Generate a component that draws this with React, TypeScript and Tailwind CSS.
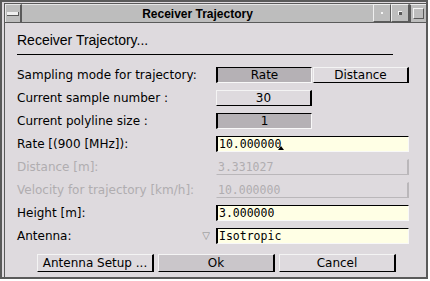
import React from "react";

const raised =
  "border-t border-l border-t-[#f4f4f4] border-l-[#f4f4f4] border-r-2 border-b border-r-black border-b-black";
const sunken =
  "border-t border-l-2 border-t-black border-l-black border-r border-b border-r-[#f8f8f8] border-b-[#f8f8f8]";
const inputBox =
  "border-t border-l-2 border-t-black border-l-black border-r border-b border-r-[#f8f8f8] border-b-[#f8f8f8] bg-[#ffffe5]";
const disabledBox =
  "border-r-2 border-b border-r-[#bab7ba] border-b-[#bab7ba] border-t border-l border-t-transparent border-l-transparent";

function Label({ children, disabled }: { children: React.ReactNode; disabled?: boolean }) {
  return (
    <div
      className={
        "w-[199px] shrink-0 text-[12px] leading-[16px] " + (disabled ? "text-[#b0adb0]" : "text-black")
      }
    >
      {children}
    </div>
  );
}

export default function App() {
  return (
    <div
      className="w-[430px] h-[281px] bg-white overflow-hidden"
      style={{ fontFamily: '"DejaVu Sans", sans-serif' }}
    >
      <div className="w-[428px] h-[279px] border-2 border-[#5a5a5a] bg-[#dedade] pt-px pl-[2px] flex flex-col">
        <div className="flex-1 border-l border-t border-[#5a5a5a] flex flex-col">
          {/* title bar */}
          <div className="h-[19px] flex shrink-0 border-b border-[#5a5a5a] bg-[#bdbdbd]">
            <div className="w-[17px] h-full border-t border-l border-[#e6e6e6] border-r-2 border-r-[#5a5a5a] flex items-center justify-center">
              <div className="w-[12px] h-[4px] bg-[#f0f0f0] border-b border-r border-[#5a5a5a]" />
            </div>
            <div
              className="flex-1 flex items-center justify-center text-[12px] font-bold text-black border-t border-[#e6e6e6]"
              style={{ fontFamily: '"Liberation Sans", Arial, sans-serif' }}
            >
              Receiver Trajectory
            </div>
            <div className="w-[18px] h-full border-t border-l border-[#efefef] border-r border-b border-r-[#5a5a5a] border-b-[#5a5a5a] flex items-center justify-center">
              <div className="w-[2px] h-[2px] bg-[#f4f4f4]" />
            </div>
            <div className="w-[18px] h-full border-t border-l border-[#efefef] border-r border-b border-r-[#5a5a5a] border-b-[#5a5a5a] flex items-center justify-center">
              <div className="w-[4px] h-[4px] bg-[#5a5a5a] border-t border-l border-[#f4f4f4]" />
            </div>
            <div className="w-[17px] h-full border-t border-l border-[#efefef] border-l-2 border-l-[#5a5a5a] flex items-center justify-center">
              <div className="w-[11px] h-[11px] border-t border-l border-[#f4f4f4] border-r border-b border-r-[#5a5a5a] border-b-[#5a5a5a]" />
            </div>
          </div>

          {/* content */}
          <div className="flex-1 flex flex-col pl-[12px] pt-[9px]">
            <div
              className="text-[14px] leading-[17px] text-black"
              style={{ fontFamily: '"Liberation Sans", Arial, sans-serif' }}
            >
              Receiver Trajectory...
            </div>
            <div className="mt-[5px] h-px w-[376px] bg-black" />

            <div className="mt-[12px] flex flex-col gap-[7px]">
              <div className="flex items-center h-[16px]">
                <Label>Sampling mode for trajectory:</Label>
                <div className={"w-[96px] h-[16px] bg-[#b5b1b5] text-[12px] leading-[14px] text-center " + sunken}>
                  Rate
                </div>
                <div className={"ml-px w-[96px] h-[16px] text-[12px] leading-[14px] text-center " + raised}>
                  Distance
                </div>
              </div>

              <div className="flex items-center h-[16px]">
                <Label>Current sample number :</Label>
                <div className={"w-[96px] h-[16px] text-[12px] leading-[14px] text-center " + raised}>30</div>
              </div>

              <div className="flex items-center h-[16px]">
                <Label>Current polyline size :</Label>
                <div className={"w-[96px] h-[16px] bg-[#b5b1b5] text-[12px] leading-[14px] text-center " + sunken}>
                  1
                </div>
              </div>

              <div className="flex items-center h-[16px]">
                <Label>Rate [(900 [MHz]):</Label>
                <div
                  className={"relative w-[193px] h-[16px] pl-px text-[11.5px] leading-[14px] text-black " + inputBox}
                  style={{ fontFamily: '"DejaVu Sans Mono", monospace' }}
                >
                  10.000000
                  <svg
                    className="absolute left-[60px] top-[9px]"
                    width="6"
                    height="4"
                    viewBox="0 0 6 4"
                  >
                    <path d="M3 0 L6 4 L0 4 Z" fill="#000" />
                  </svg>
                </div>
              </div>

              <div className="flex items-center h-[16px]">
                <Label disabled>Distance [m]:</Label>
                <div
                  className={"w-[193px] h-[16px] pl-px text-[11.5px] leading-[14px] text-[#b0adb0] " + disabledBox}
                  style={{ fontFamily: '"DejaVu Sans Mono", monospace' }}
                >
                  3.331027
                </div>
              </div>

              <div className="flex items-center h-[16px]">
                <Label disabled>Velocity for trajectory [km/h]:</Label>
                <div
                  className={"w-[193px] h-[16px] pl-px text-[11.5px] leading-[14px] text-[#b0adb0] " + disabledBox}
                  style={{ fontFamily: '"DejaVu Sans Mono", monospace' }}
                >
                  10.000000
                </div>
              </div>

              <div className="flex items-center h-[16px]">
                <Label>Height [m]:</Label>
                <div
                  className={"w-[193px] h-[16px] pl-px text-[11.5px] leading-[14px] text-black " + inputBox}
                  style={{ fontFamily: '"DejaVu Sans Mono", monospace' }}
                >
                  3.000000
                </div>
              </div>

              <div className="flex items-center h-[16px]">
                <div className="w-[199px] shrink-0 flex items-center justify-between text-[12px] leading-[16px] pr-[6px]">
                  <span>Antenna:</span>
                  <span className="text-[10px] text-[#8a8a8a]">▽</span>
                </div>
                <div
                  className={"w-[193px] h-[16px] pl-px text-[11.5px] leading-[14px] text-black " + inputBox}
                  style={{ fontFamily: '"DejaVu Sans Mono", monospace' }}
                >
                  Isotropic
                </div>
              </div>
            </div>

            <div className="mt-[10px] ml-[20px] flex gap-[4px]">
              <div className={"w-[117px] h-[18px] text-[12px] leading-[16px] text-center " + raised}>
                Antenna Setup ...
              </div>
              <div className={"w-[117px] h-[18px] bg-[#cac6ca] text-[12px] leading-[16px] text-center " + raised}>
                Ok
              </div>
              <div className={"w-[117px] h-[18px] text-[12px] leading-[16px] text-center " + raised}>
                Cancel
              </div>
            </div>
          </div>
        </div>
      </div>
    </div>
  );
}
